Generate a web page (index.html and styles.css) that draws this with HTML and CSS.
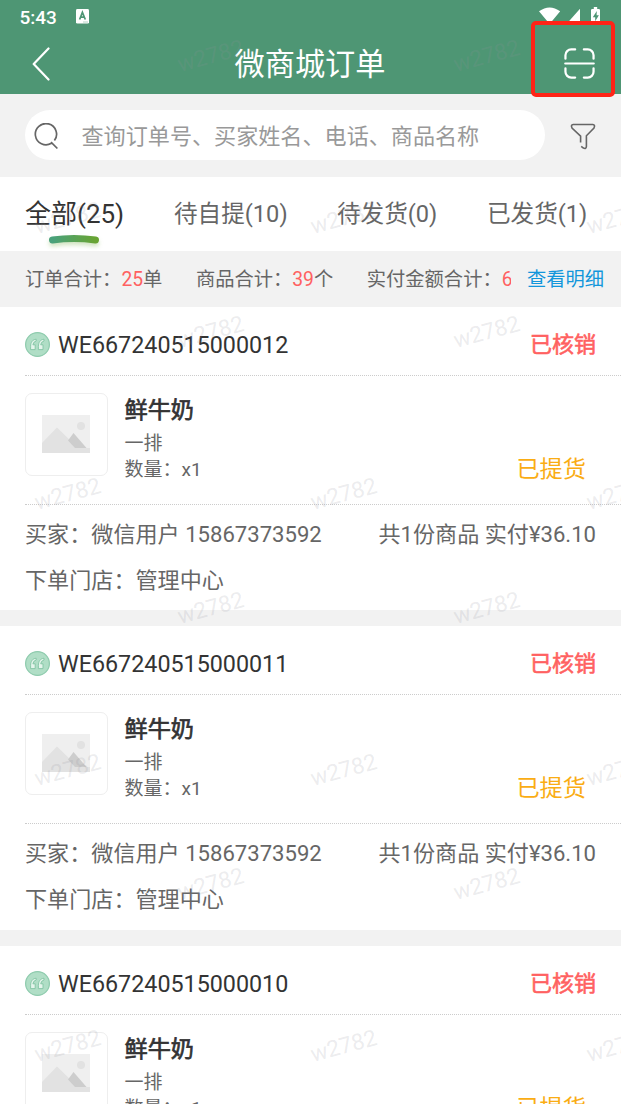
FILE: index.html
```html
<!DOCTYPE html>
<html lang="zh-CN">
<head>
<meta charset="utf-8">
<title>微商城订单</title>
<link rel="stylesheet" href="styles.css">
</head>
<body>
<svg class="defs" aria-hidden="true">
  <symbol id="quote" viewBox="0 0 25 25">
    <circle cx="12.5" cy="12.5" r="11.9" fill="#b0dec6" stroke="#8ecbad" stroke-width="1.2"/>
    <path d="M11.2 7.2C7.4 7.6 5.6 10.4 5.6 14.4V17.6H10.2V12.8H7.9Q8.2 9.8 11.2 9ZM19 7.2C15.2 7.6 13.4 10.4 13.4 14.4V17.6H18V12.8H15.7Q16 9.8 19 9Z" fill="#e4f4eb" stroke="#82c4a4" stroke-width=".9" stroke-linejoin="round"/>
  </symbol>
  <symbol id="photo" viewBox="0 0 48 38">
    <path fill="#efefef" d="M0 0h48v38H0z"/>
    <circle cx="39" cy="11" r="4" fill="#e2e2e2"/>
    <path fill="#e2e2e2" d="M0 28 15 12.5 36 33h12v5H0z"/>
    <path fill="#cdcdcd" d="M26 25.5 31.5 18 44.5 33H33z"/>
  </symbol>
</svg>
<div class="screen">
  <header class="header">
    <div class="status">
      <span class="time">5:43</span>
      <svg class="badge-a" viewBox="0 0 13 15"><rect width="13" height="14.6" rx="1.4" fill="#fff"/><path d="M3.6 10.5 6.4 3.4 9.3 10.5M4.7 8.2h3.5" fill="none" stroke="#4e9674" stroke-width="1.7"/><path d="M7 13h5" stroke="#b5d2c4" stroke-width="1"/></svg>
      <svg class="signals" viewBox="0 0 63 18">
        <path fill="#fff" d="M0 4.2Q10.6-3.4 21.2 4.2L10.6 17zM27.5 17 41 1.8V17zM52 3.2q0-1.2 1.2-1.2h1.6V0h3.4v2h1.6Q61 2 61 3.2V18h-9z"/>
        <path fill="#4e9674" d="M57.8 4 53.8 10.2h2.4v4l3.7-6h-2.3z"/>
      </svg>
    </div>
    <div class="titlebar">
      <svg class="back" viewBox="0 0 18 34"><path d="M16.5 1.5 1.7 17 16.5 32.5" fill="none" stroke="#fff" stroke-width="2.2" stroke-linecap="round" stroke-linejoin="round"/></svg>
      <h1 class="title">微商城订单</h1>
      <div class="scan"><svg viewBox="0 0 32 32"><path d="M1.5 11V7.5a6 6 0 0 1 6-6H11.5M20.5 1.5h4a6 6 0 0 1 6 6V11M30.5 21v3.5a6 6 0 0 1-6 6H20.5M11.5 30.5H7.5a6 6 0 0 1-6-6V21M1.3 16h29.4" fill="none" stroke="#fff" stroke-width="2.3" stroke-linecap="round"/></svg></div>
    </div>
  </header>

  <div class="search">
    <div class="search-box">
      <svg class="lens" viewBox="0 0 26 27"><path d="M17.4 20.3a10.6 10.6 0 1 1 3-2.7M17 19.2 23.4 25.5" fill="none" stroke="#666" stroke-width="1.7"/></svg>
      <span>查询订单号、买家姓名、电话、商品名称</span>
    </div>
    <svg class="filter" viewBox="0 0 26 27"><path d="M10.6 19.5V13.2L2 5Q.5 1.8 3.2 1.5H22.8Q25.5 1.8 24 5L16.4 12.8V23.5Q16.2 26.3 13.4 25.1L11.2 23.3" fill="none" stroke="#666" stroke-width="1.6"/></svg>
  </div>

  <nav class="tabs">
    <div class="tab active">全部(25)<svg class="mark" viewBox="0 0 50 9"><defs><linearGradient id="g"><stop stop-color="#49a17b"/><stop offset="1" stop-color="#68a432"/></linearGradient></defs><path d="M3.5 5Q25 2 46.5 5" fill="none" stroke="url(#g)" stroke-width="7" stroke-linecap="round"/></svg></div>
    <div class="tab">待自提(10)</div>
    <div class="tab">待发货(0)</div>
    <div class="tab">已发货(1)</div>
  </nav>

  <div class="summary">
    <div class="totals">
      <span>订单合计：<b>25</b>单</span>
      <span>商品合计：<b>39</b>个</span>
      <span>实付金额合计：<b>6</b></span>
    </div>
    <a class="detail">查看明细</a>
  </div>

  <main class="orders">
    <article class="order">
      <div class="order-head"><svg class="quote"><use href="#quote"/></svg><span class="number">WE667240515000012</span><span class="state">已核销</span></div>
      <div class="item"><div class="thumb"><svg><use href="#photo"/></svg></div><div class="info"><h2>鲜牛奶</h2><p>一排</p><p>数量：x1</p></div><span class="pickup">已提货</span></div>
      <div class="foot"><div class="row"><span>买家：微信用户 15867373592</span><span>共1份商品 实付¥36.10</span></div><div class="row">下单门店：管理中心</div></div>
    </article>
    <article class="order">
      <div class="order-head"><svg class="quote"><use href="#quote"/></svg><span class="number">WE667240515000011</span><span class="state">已核销</span></div>
      <div class="item"><div class="thumb"><svg><use href="#photo"/></svg></div><div class="info"><h2>鲜牛奶</h2><p>一排</p><p>数量：x1</p></div><span class="pickup">已提货</span></div>
      <div class="foot"><div class="row"><span>买家：微信用户 15867373592</span><span>共1份商品 实付¥36.10</span></div><div class="row">下单门店：管理中心</div></div>
    </article>
    <article class="order">
      <div class="order-head"><svg class="quote"><use href="#quote"/></svg><span class="number">WE667240515000010</span><span class="state">已核销</span></div>
      <div class="item"><div class="thumb"><svg><use href="#photo"/></svg></div><div class="info"><h2>鲜牛奶</h2><p>一排</p><p>数量：x1</p></div><span class="pickup">已提货</span></div>
    </article>
  </main>

  <svg class="watermark" viewBox="0 0 621 1104" aria-hidden="true">
    <defs><g id="wr"><text transform="translate(180 72) rotate(-15)">w2782</text><text transform="translate(456 72) rotate(-15)">w2782</text></g>
    <g id="ws"><text transform="translate(37 234) rotate(-15)">w2782</text><text transform="translate(313 234) rotate(-15)">w2782</text><text transform="translate(589 234) rotate(-15)">w2782</text></g></defs>
    <use href="#wr"/><use href="#wr" y="276"/><use href="#wr" y="552"/><use href="#wr" y="828"/>
    <use href="#ws"/><use href="#ws" y="276"/><use href="#ws" y="552"/><use href="#ws" y="828"/>
  </svg>
  <div class="highlight"></div>
</div>
</body>
</html>
```
FILE: styles.css
```css
* { box-sizing: border-box; }
body { margin: 0; background: #f2f2f2; font-family: Roboto, "Noto Sans CJK SC", sans-serif; color: #666; }
h1, h2, p { margin: 0; font-weight: 400; }
svg { display: block; }
.defs { position: absolute; width: 0; height: 0; }
.screen { position: relative; width: 621px; height: 1104px; overflow: hidden; }

.header { height: 94px; background: #4e9674; color: #fff; }
.status { display: flex; align-items: center; height: 34px; padding: 0 19px 0 19.5px; }
.time { font-size: 19px; font-weight: 500; }
.badge-a { width: 13px; height: 15px; margin: -1px 0 0 19px; }
.signals { width: 63px; height: 18px; margin-left: auto; margin-top: -2px; }
.titlebar { display: grid; grid-template-columns: 119px 1fr 120px; align-items: center; height: 60px; }
.back { width: 18px; height: 34px; margin-left: 32px; }
.title { font-size: 30.2px; line-height: 60px; padding-top: 1px; margin-bottom: -1px; text-align: center; }
.scan { display: flex; justify-content: flex-end; padding-right: 26px; }
.scan svg { width: 31px; height: 31px; margin-top: -1px; }

.search { display: flex; align-items: center; height: 83px; padding: 0 0 1px 25px; }
.search-box { display: flex; align-items: center; width: 520px; height: 50px; padding-left: 9px; border-radius: 25px; background: #fff; color: #999; font-size: 22.1px; }
.search-box span { margin-top: -3px; }
.lens { width: 26px; height: 27px; margin: 2px 21.5px 0 0; }
.filter { width: 26px; height: 27px; margin: 2px 0 0 25px; }

.tabs { display: flex; height: 74px; padding-left: 25px; background: #fff; line-height: 75px; white-space: nowrap; }
.tab { font-size: 23.6px; }
.tab.active { position: relative; color: #333; font-size: 26px; }
.tab:nth-child(1) { width: 149px; }
.tab:nth-child(2) { width: 163px; }
.tab:nth-child(3) { width: 150px; }
.mark { position: absolute; left: 24px; top: 58px; width: 50px; height: 9px; overflow: visible; filter: drop-shadow(0 3px 2px rgba(104, 164, 50, .3)); }

.summary { display: flex; align-items: center; height: 56px; padding: 0 0 2px 25px; font-size: 19.3px; white-space: nowrap; }
.totals { display: flex; gap: 33.5px; width: 486px; overflow: hidden; }
.totals b { font-weight: 400; color: #ff6161; }
.detail { margin-left: 16px; color: #1296db; }

.orders { display: flex; flex-direction: column; gap: 16.2px; }
.order { height: 303.2px; padding-left: 25px; background: #fff; }
.order-head { display: flex; align-items: center; height: 69px; padding: 7px 25px 0 0; border-bottom: 1px dotted #ccc; }
.quote { width: 25px; height: 25px; margin-right: 8px; }
.number { color: #333; font-size: 23.3px; padding-top: 1px; }
.state { margin: -5px 0 0 auto; color: #ff6161; font-size: 22px; -webkit-text-stroke: .6px #ff6161; }
.item { display: flex; height: 129px; padding: 17px 35px 0 0; border-bottom: 1px dotted #ccc; }
.thumb { display: grid; place-items: center; width: 82.5px; height: 83px; margin-right: 17px; padding: 0 1px 1px 0; border: 1.5px solid #eee; border-radius: 7px; }
.thumb svg { width: 48px; height: 38px; }
.info { font-size: 19px; line-height: 26px; }
.info h2 { color: #333; font-size: 23.2px; line-height: 34px; -webkit-text-stroke: .7px #333; }
.info h2 + p { margin-top: 4px; }
.pickup { align-self: flex-end; margin-left: auto; padding-bottom: 18px; color: #faad14; font-size: 23.2px; line-height: 34px; }
.foot { padding: 6px 25px 0 0; font-size: 22.1px; }
.row { display: flex; justify-content: space-between; height: 45.5px; line-height: 46px; white-space: nowrap; }

.watermark { position: absolute; inset: 0; width: 621px; height: 1104px; fill: rgba(145, 145, 155, .18); font-size: 22.5px; }
.highlight { position: absolute; left: 530.5px; top: 21px; width: 84px; height: 76px; border: 4px solid #ff2417; border-radius: 5px; }
```
